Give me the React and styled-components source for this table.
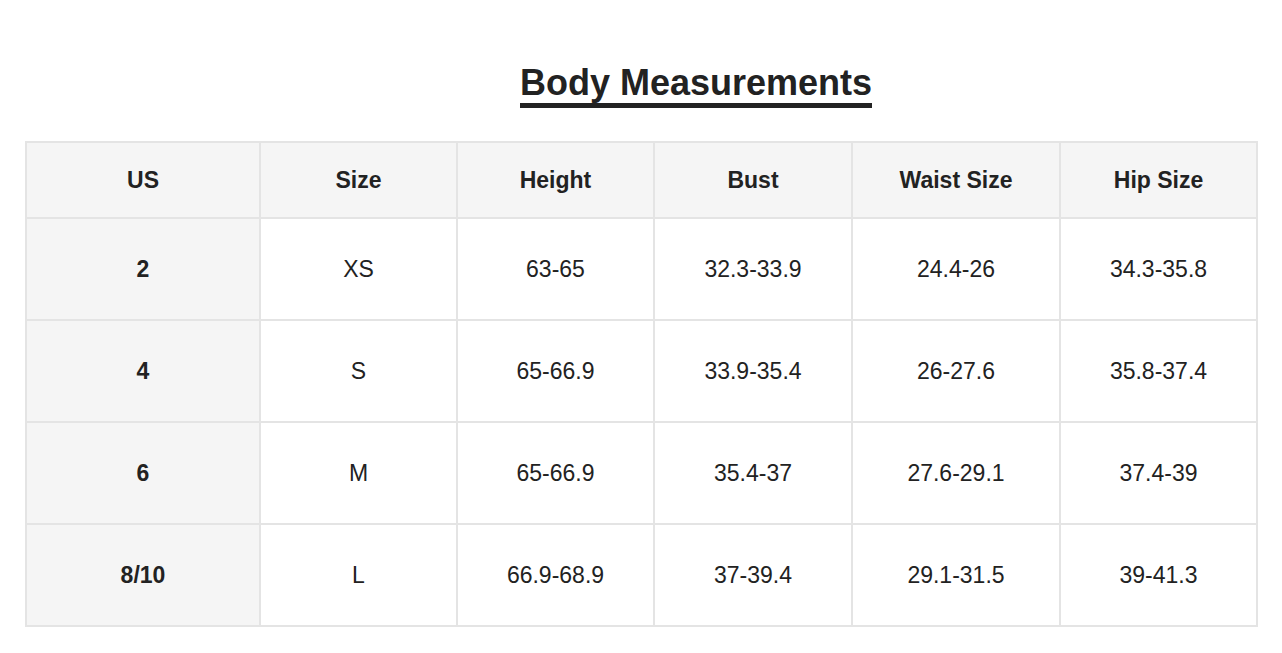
import React from "react"
import styled, { createGlobalStyle } from "styled-components"

const GlobalStyle = createGlobalStyle`
  body {
    margin: 0;
    background: #fff;
    font-family: "Liberation Sans", Arial, sans-serif;
    color: #222;
  }
`

const columns = [
  { label: "US", width: 234 },
  { label: "Size", width: 197 },
  { label: "Height", width: 197 },
  { label: "Bust", width: 198 },
  { label: "Waist Size", width: 208 },
  { label: "Hip Size", width: 197 },
]

const rows = [
  ["2", "XS", "63-65", "32.3-33.9", "24.4-26", "34.3-35.8"],
  ["4", "S", "65-66.9", "33.9-35.4", "26-27.6", "35.8-37.4"],
  ["6", "M", "65-66.9", "35.4-37", "27.6-29.1", "37.4-39"],
  ["8/10", "L", "66.9-68.9", "37-39.4", "29.1-31.5", "39-41.3"],
]

export default () => {
  return (
    <>
      <GlobalStyle />
      <Page>
        <TitleBar>
          <Title>Body Measurements</Title>
        </TitleBar>
        <Table>
          <colgroup>
            {columns.map(c => (
              <col key={c.label} style={{ width: c.width }} />
            ))}
          </colgroup>
          <thead>
            <HeadRow>
              {columns.map(c => (
                <HeadCell key={c.label}>{c.label}</HeadCell>
              ))}
            </HeadRow>
          </thead>
          <tbody>
            {rows.map(r => (
              <Row key={r[0]}>
                {r.map((v, i) => (
                  <Cell key={i} first={i === 0}>
                    {v}
                  </Cell>
                ))}
              </Row>
            ))}
          </tbody>
        </Table>
      </Page>
    </>
  )
}

const Page = styled.div`
  padding: 64px 0 26px 25px;
`

const TitleBar = styled.div`
  display: flex;
  justify-content: center;
  padding-left: 85px;
  margin-bottom: 33px;
`

const Title = styled.h1`
  margin: 0;
  padding-bottom: 1px;
  font-size: 36px;
  line-height: 38px;
  font-weight: bold;
  color: #222;
  border-bottom: 5px solid #222;
`

const Table = styled.table`
  width: 1233px;
  table-layout: fixed;
  border-collapse: collapse;
  font-size: 23px;
  color: #222;
`

const HeadRow = styled.tr`
  height: 76px;
`

const Row = styled.tr`
  height: 102px;
`

const HeadCell = styled.th`
  border: 2px solid #e4e4e4;
  background: #f5f5f5;
  font-weight: bold;
  text-align: center;
  vertical-align: middle;
  padding: 0;
`

const Cell = styled.td`
  border: 2px solid #e4e4e4;
  background: ${p => (p.first ? "#f5f5f5" : "#fff")};
  font-weight: ${p => (p.first ? "bold" : "normal")};
  text-align: center;
  vertical-align: middle;
  padding: 0;
`
